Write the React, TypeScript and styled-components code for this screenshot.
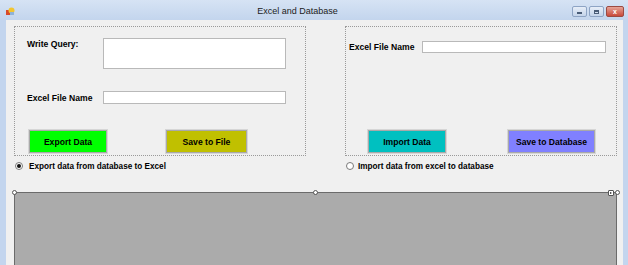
import React from 'react';
import styled, { createGlobalStyle } from 'styled-components';

const GlobalStyle = createGlobalStyle`
  body {
    margin: 0;
    background: #fff;
  }
  * {
    box-sizing: border-box;
  }
`;

const Window = styled.div`
  width: 628px;
  height: 265px;
  overflow: hidden;
  display: flex;
  flex-direction: column;
  background: #c3d5ee;
  font-family: "Liberation Sans", Arial, sans-serif;
  color: #000;
`;

const TitleBar = styled.div`
  height: 20px;
  flex-shrink: 0;
  display: flex;
  align-items: center;
  padding: 0 4px 0 6px;
  background: linear-gradient(#d6e3f4, #c3d5ed);
`;

const AppIcon = styled.svg`
  width: 9px;
  height: 9px;
  margin-top: 3px;
`;

const Title = styled.div`
  flex: 1;
  text-align: center;
  font-size: 9px;
  color: #1c1c1c;
  padding-left: 8px;
  padding-top: 2px;
`;

const CaptionButtons = styled.div`
  display: flex;
  gap: 2px;
  margin-top: 3px;
`;

const CaptionButton = styled.div<{ $close?: boolean }>`
  width: ${p => (p.$close ? 18 : 15)}px;
  height: 11px;
  border: 1px solid ${p => (p.$close ? '#9b4a42' : '#8ea4c4')};
  border-radius: 2px;
  background: ${p =>
    p.$close
      ? 'linear-gradient(#e6a497, #c9493a)'
      : 'linear-gradient(#e7eef8, #c4d4ea)'};
  display: flex;
  align-items: center;
  justify-content: center;
  font-size: 7px;
  line-height: 1;
  font-weight: bold;
  color: #fff;
`;

const MinGlyph = styled.span`
  width: 5px;
  height: 2px;
  background: #4a5d78;
  margin-top: 3px;
`;

const MaxGlyph = styled.span`
  width: 5px;
  height: 4px;
  border: 1px solid #4a5d78;
  border-top-width: 2px;
`;

const Client = styled.div`
  flex: 1;
  display: flex;
  flex-direction: column;
  margin: 0 5px 0 6px;
  padding: 6px 0 0 8px;
  background: #f0f0f0;
`;

const TopSection = styled.div`
  display: flex;
  gap: 39px;
`;

const Column = styled.div`
  display: flex;
  flex-direction: column;
`;

const GroupBox = styled.div<{ $width: number; $pad: string }>`
  width: ${p => p.$width}px;
  height: 130px;
  border: 1px dotted #9a9a9a;
  padding: ${p => p.$pad};
  display: flex;
  flex-direction: column;
`;

const FieldRow = styled.div<{ $align?: string; $top?: number }>`
  display: flex;
  align-items: ${p => p.$align || 'center'};
  margin-top: ${p => p.$top || 0}px;
`;

const Label = styled.div<{ $width: number }>`
  width: ${p => p.$width}px;
  font-size: 8.6px;
  font-weight: bold;
  line-height: 12px;
`;

const TextBox = styled.div<{ $width: number; $height: number }>`
  width: ${p => p.$width}px;
  height: ${p => p.$height}px;
  background: #fff;
  border: 1px solid #b9b9b9;
`;

const ButtonRow = styled.div<{ $indent: number; $gap: number }>`
  margin-top: auto;
  display: flex;
  gap: ${p => p.$gap}px;
  padding-left: ${p => p.$indent}px;
`;

const ColorButton = styled.div<{ $bg: string; $width: number }>`
  width: ${p => p.$width}px;
  height: 23px;
  background: ${p => p.$bg};
  border: 1px solid #a9a9a9;
  box-shadow: 0 0 0 1px #d6d6d6;
  display: flex;
  align-items: center;
  justify-content: center;
  font-size: 8.6px;
  font-weight: bold;
`;

const RadioRow = styled.div<{ $gap: number }>`
  margin-top: 4px;
  height: 12px;
  display: flex;
  align-items: center;
  gap: ${p => p.$gap}px;
  padding-left: 1px;
  font-size: 8.2px;
  font-weight: bold;
`;

const RadioDot = styled.span<{ $checked?: boolean }>`
  width: 8px;
  height: 8px;
  border-radius: 50%;
  border: 1px solid #7a7a7a;
  background: #fff;
  display: flex;
  align-items: center;
  justify-content: center;

  &::after {
    content: '';
    width: 4px;
    height: 4px;
    border-radius: 50%;
    background: ${p => (p.$checked ? '#111' : 'transparent')};
  }
`;

const GridArea = styled.div`
  position: relative;
  margin-top: 20px;
  width: 603px;
  flex: 1;
  background: #ababab;
  border: 1px solid #6b6b6b;
  border-bottom: none;
`;

const Handle = styled.span<{ $left: string }>`
  position: absolute;
  top: -3px;
  left: ${p => p.$left};
  width: 5px;
  height: 5px;
  margin-left: -3px;
  border-radius: 50%;
  border: 1px solid #555;
  background: #fff;
`;

const SmartTag = styled.span`
  position: absolute;
  top: -3px;
  right: 2px;
  width: 6px;
  height: 6px;
  border: 1px solid #555;
  background: #fff;
  border-radius: 1px;

  &::after {
    content: '';
    position: absolute;
    left: 1px;
    top: 1px;
    border-left: 2px solid #222;
    border-top: 1px solid transparent;
    border-bottom: 1px solid transparent;
  }
`;

export default function App() {
  return (
    <>
      <GlobalStyle />
      <Window>
        <TitleBar>
          <AppIcon viewBox="0 0 9 9">
            <rect x="0" y="3" width="5" height="5" fill="#d84a2a" />
            <circle cx="5.5" cy="3.5" r="3" fill="#f2c531" />
            <rect x="4" y="5" width="4" height="3" fill="#8fb3d9" />
          </AppIcon>
          <Title>Excel and Database</Title>
          <CaptionButtons>
            <CaptionButton>
              <MinGlyph />
            </CaptionButton>
            <CaptionButton>
              <MaxGlyph />
            </CaptionButton>
            <CaptionButton $close>x</CaptionButton>
          </CaptionButtons>
        </TitleBar>

        <Client>
          <TopSection>
            <Column>
              <GroupBox $width={292} $pad="11px 0 2px 12px">
                <FieldRow $align="flex-start">
                  <Label $width={76}>Write Query:</Label>
                  <TextBox $width={183} $height={31} />
                </FieldRow>
                <FieldRow $top={22}>
                  <Label $width={76}>Excel File Name</Label>
                  <TextBox $width={183} $height={13} />
                </FieldRow>
                <ButtonRow $indent={2} $gap={59}>
                  <ColorButton $bg="#00ff00" $width={78}>Export Data</ColorButton>
                  <ColorButton $bg="#c0c000" $width={81}>Save to File</ColorButton>
                </ButtonRow>
              </GroupBox>
              <RadioRow $gap={6}>
                <RadioDot $checked />
                Export data from database to Excel
              </RadioRow>
            </Column>

            <Column>
              <GroupBox $width={272} $pad="14px 0 2px 3px">
                <FieldRow>
                  <Label $width={73}>Excel File Name</Label>
                  <TextBox $width={184} $height={12} />
                </FieldRow>
                <ButtonRow $indent={19} $gap={62}>
                  <ColorButton $bg="#00c0c0" $width={78}>Import Data</ColorButton>
                  <ColorButton $bg="#8080ff" $width={87}>Save to Database</ColorButton>
                </ButtonRow>
              </GroupBox>
              <RadioRow $gap={4}>
                <RadioDot />
                Import data from excel to database
              </RadioRow>
            </Column>
          </TopSection>

          <GridArea>
            <Handle $left="0" />
            <Handle $left="50%" />
            <Handle $left="calc(100% + 2px)" />
            <SmartTag />
          </GridArea>
        </Client>
      </Window>
    </>
  );
}
